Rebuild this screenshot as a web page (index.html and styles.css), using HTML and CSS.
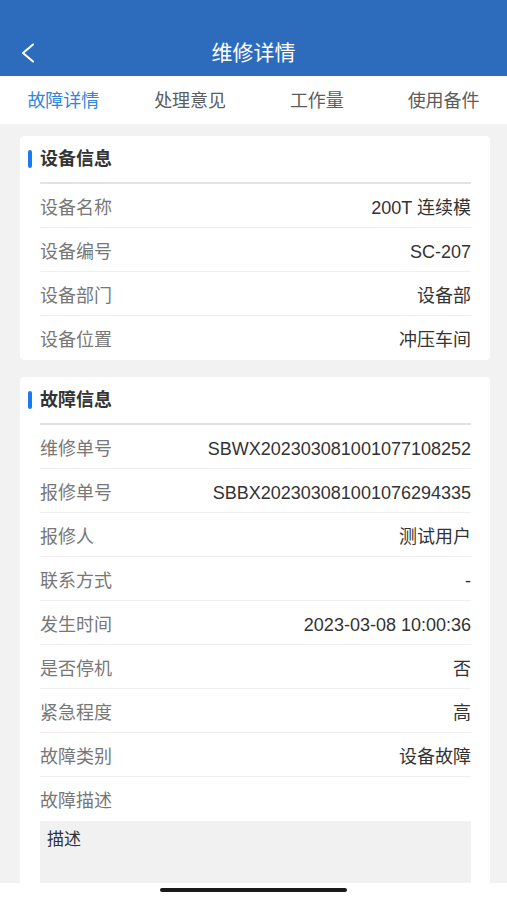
FILE: index.html
```html
<!DOCTYPE html>
<html lang="zh-CN">
<head>
  <meta charset="UTF-8">
  <meta name="viewport" content="width=device-width, initial-scale=1.0">
  <title>维修详情</title>
  <link rel="stylesheet" href="styles.css">
</head>
<body>

<div class="nav">
  <div class="nav-bar">
    <svg class="back" width="14" height="20" viewBox="0 0 14 20">
      <polyline points="12,1.5 2,10 12,18.5" fill="none" stroke="#fff" stroke-width="2" stroke-linecap="round" stroke-linejoin="round"/>
    </svg>
    <h1>维修详情</h1>
  </div>
</div>

<div class="tabs">
  <div class="tab active">故障详情</div>
  <div class="tab">处理意见</div>
  <div class="tab">工作量</div>
  <div class="tab">使用备件</div>
</div>

<div class="content">
  <div class="card">
    <div class="card-title">设备信息</div>
    <div class="row"><span class="label">设备名称</span><span class="value">200T 连续模</span></div>
    <div class="row"><span class="label">设备编号</span><span class="value">SC-207</span></div>
    <div class="row"><span class="label">设备部门</span><span class="value">设备部</span></div>
    <div class="row"><span class="label">设备位置</span><span class="value">冲压车间</span></div>
  </div>

  <div class="card">
    <div class="card-title">故障信息</div>
    <div class="row"><span class="label">维修单号</span><span class="value">SBWX202303081001077108252</span></div>
    <div class="row"><span class="label">报修单号</span><span class="value">SBBX202303081001076294335</span></div>
    <div class="row"><span class="label">报修人</span><span class="value">测试用户</span></div>
    <div class="row"><span class="label">联系方式</span><span class="value">-</span></div>
    <div class="row"><span class="label">发生时间</span><span class="value">2023-03-08 10:00:36</span></div>
    <div class="row"><span class="label">是否停机</span><span class="value">否</span></div>
    <div class="row"><span class="label">紧急程度</span><span class="value">高</span></div>
    <div class="row"><span class="label">故障类别</span><span class="value">设备故障</span></div>
    <div class="row plain"><span class="label">故障描述</span></div>
    <div class="desc">描述</div>
  </div>
</div>

<div class="home-bar">
  <div class="home-indicator"></div>
</div>

</body>
</html>
```

FILE: styles.css
```css
body {
  margin: 0;
  font-family: "Liberation Sans", "Noto Sans CJK SC", sans-serif;
  background-color: #f2f2f2;
  color: #333;
}

.nav {
  background-color: #2d6cbd;
  height: 76px;
  padding-top: 28px;
  box-sizing: border-box;
}

.nav-bar {
  position: relative;
  height: 48px;
  display: flex;
  align-items: center;
  justify-content: center;
}

.nav-bar .back {
  position: absolute;
  left: 21px;
  top: 15px;
}

.nav-bar h1 {
  margin: 0 0 2px;
  font-size: 21px;
  font-weight: normal;
  color: #fff;
}

.tabs {
  display: flex;
  height: 48px;
  background-color: #fff;
}

.tab {
  flex: 1;
  display: flex;
  align-items: center;
  justify-content: center;
  padding-bottom: 3px;
  font-size: 18px;
  color: #5c5c5c;
}

.tab.active {
  color: #2f87dc;
}

.content {
  padding: 12px 17px 40px 20px;
}

.card {
  background-color: #fff;
  border-radius: 4px;
  padding: 0 19px 0 20px;
  margin-bottom: 17px;
}

.card-title {
  position: relative;
  height: 48px;
  line-height: 46px;
  box-sizing: border-box;
  font-size: 18px;
  font-weight: bold;
  color: #333;
  border-bottom: 2px solid #e2e2e2;
}

.card-title::before {
  content: "";
  position: absolute;
  left: -12px;
  top: 14px;
  width: 4px;
  height: 18px;
  border-radius: 2px;
  background-color: #1a7af0;
}

.row {
  display: flex;
  justify-content: space-between;
  align-items: baseline;
  height: 44px;
  padding-top: 9px;
  box-sizing: border-box;
  border-bottom: 1px solid #f0f0f0;
  font-size: 18px;
}

.row:last-child,
.row.plain {
  border-bottom: none;
}

.label {
  color: #777;
}

.value {
  color: #333;
}

.desc {
  background-color: #f1f1f1;
  height: 90px;
  padding: 4px 7px;
  box-sizing: border-box;
  font-size: 17px;
  color: #333;
}

.home-bar {
  position: fixed;
  left: 0;
  right: 0;
  bottom: 0;
  height: 17px;
  background-color: #fff;
  display: flex;
  justify-content: center;
  padding-top: 5px;
  box-sizing: border-box;
}

.home-indicator {
  width: 187px;
  height: 4px;
  border-radius: 2px;
  background-color: #1a1a1a;
}
```
